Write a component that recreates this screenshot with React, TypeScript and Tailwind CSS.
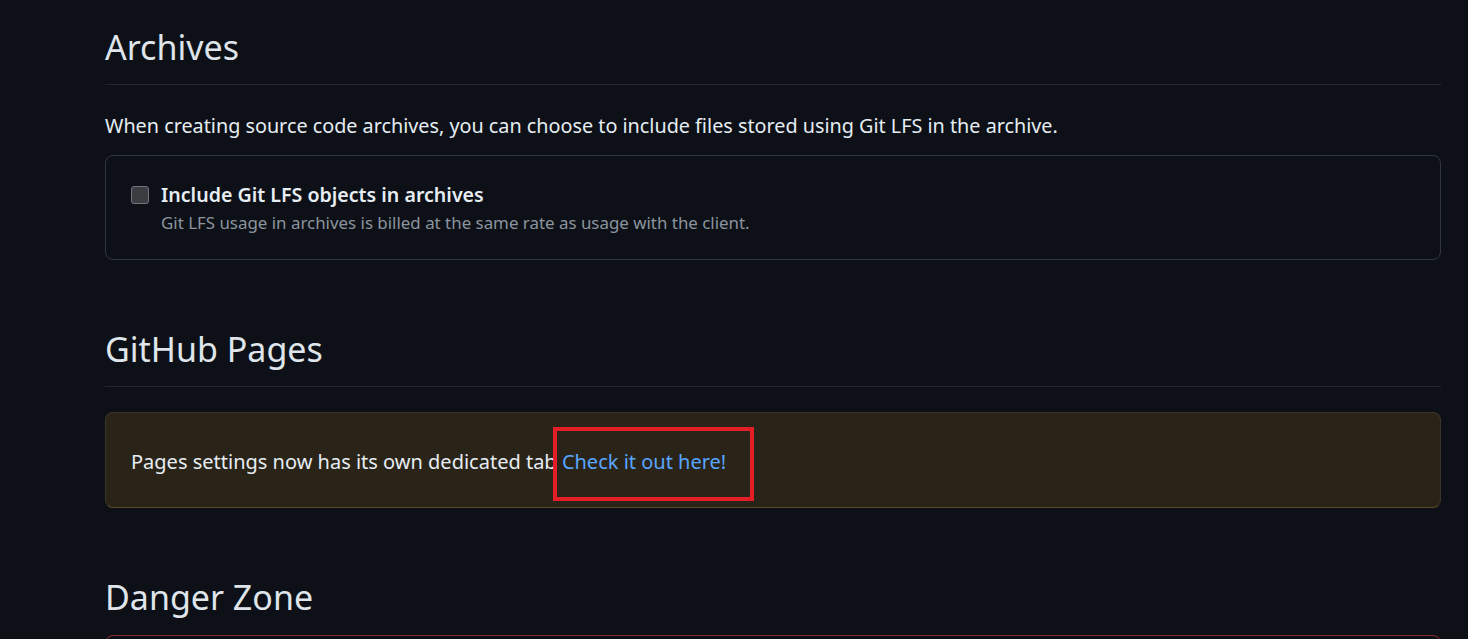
import React from "react"

const font = { fontFamily: '"Noto Sans", "Open Sans", sans-serif' }

function SectionHeading({ title }: { title: string }) {
  return (
    <div className="border-b border-[#21262d] pb-[15px]">
      <h2 className="text-[34px] leading-[44px] font-normal text-[#dfe5eb]">{title}</h2>
    </div>
  )
}

export default function App() {
  return (
    <div className="min-h-screen bg-[#0d1117] text-[#e6edf3] overflow-hidden" style={font}>
      <div className="ml-[105px] mr-[27px] pt-[25px]">
        {/* Archives */}
        <SectionHeading title="Archives" />
        <p className="mt-[26px] text-[19.8px] leading-[30px] text-[#e6edf3]">
          When creating source code archives, you can choose to include files stored using Git LFS in the archive.
        </p>
        <div className="mt-[14px] rounded-[8px] border border-[#30363d] px-[25px] pt-[24px] pb-[23px]">
          <label className="flex items-start gap-[12px]">
            <span className="mt-[6px] h-[18px] w-[18px] shrink-0 rounded-[3px] border border-[#6e7681] bg-[#3b3d40]" />
            <span className="flex flex-col">
              <span className="text-[19.6px] leading-[30px] font-semibold text-[#e6edf3]">Include Git LFS objects in archives</span>
              <span className="text-[16.9px] leading-[26px] text-[#8b949e]">
                Git LFS usage in archives is billed at the same rate as usage with the client.
              </span>
            </span>
          </label>
        </div>

        {/* GitHub Pages */}
        <div className="mt-[67px]">
          <SectionHeading title="GitHub Pages" />
        </div>
        <div className="mt-[25px] rounded-[8px] border border-[#3b3527] border-b-[#5a4b22] bg-[#2a2317] px-[25px] pt-[34px] pb-[30px]">
          <p className="text-[20px] leading-[30px] text-[#e6edf3]">
            Pages settings now has its own dedicated tab{" "}
            <span className="relative inline-block">
              <a href="#" className="text-[#58a6ff]">Check it out here!</a>
              <span className="absolute left-[-9px] top-[-20px] h-[74px] w-[201px] border-[4px] border-[#e31e26]" />
            </span>
          </p>
        </div>

        {/* Danger Zone */}
        <div className="mt-[67px]">
          <h2 className="text-[34px] leading-[44px] font-normal text-[#dfe5eb]">Danger Zone</h2>
        </div>
        <div className="mt-[16px] h-[60px] rounded-[8px] border border-[#8e2a33]" />
      </div>
    </div>
  )
}
